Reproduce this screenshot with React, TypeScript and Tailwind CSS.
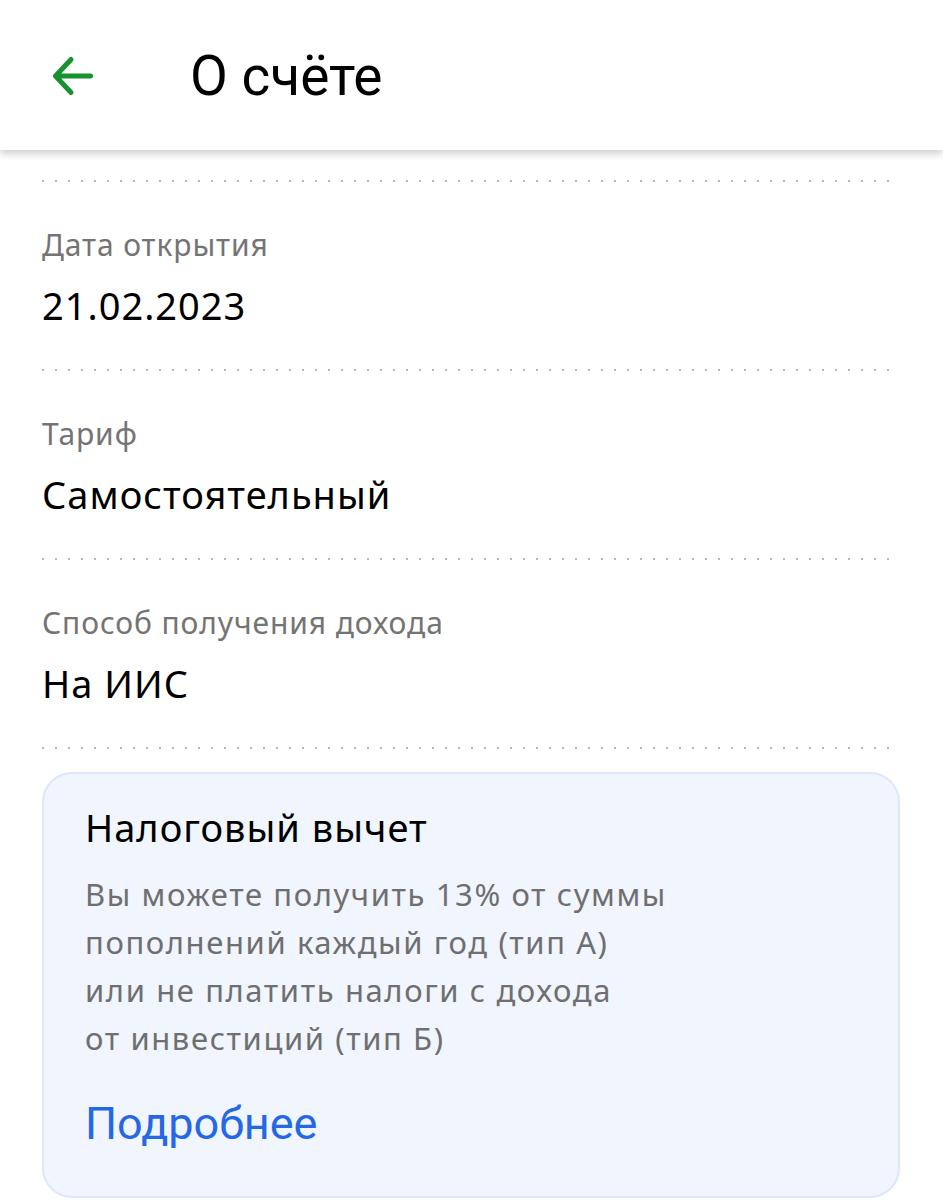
import React from 'react';

const rows = [
  { label: 'Дата открытия', value: '21.02.2023' },
  { label: 'Тариф', value: 'Самостоятельный' },
  { label: 'Способ получения дохода', value: 'На ИИС' },
];

const Dots = () => (
  <div className="h-[2px] w-full bg-[linear-gradient(to_right,#b8b8b8_2px,transparent_2px)] bg-[length:13px_2px] bg-repeat-x" />
);

const App: React.FC = () => {
  return (
    <div className="min-h-screen bg-white font-['Noto_Sans',sans-serif]">
      <header className="relative z-10 flex h-[150px] items-center bg-white shadow-[0_3px_8px_rgba(0,0,0,0.22)]">
        <svg width="46" height="46" viewBox="0 0 46 46" className="ml-[50px] mt-[4px]" fill="none">
          <path
            d="M5.5 22H40.5M21 5.5L5.5 22L21 38.5"
            stroke="#17922f"
            strokeWidth="5"
            strokeLinecap="round"
            strokeLinejoin="round"
          />
        </svg>
        <h1 className="ml-[94px] mt-[2px] font-['Roboto',sans-serif] text-[55px] leading-none text-black">
          О счёте
        </h1>
      </header>

      <main className="pl-[42px] pr-[43px] pt-[30px]">
        <Dots />
        {rows.map((row) => (
          <div key={row.label}>
            <div className="pt-[45px] pb-[42px]">
              <div className="text-[30px] leading-[36px] tracking-[0.9px] text-[#747474]">{row.label}</div>
              <div className="mt-[20px] text-[38px] leading-[44px] tracking-[1px] text-black">{row.value}</div>
            </div>
            <Dots />
          </div>
        ))}

        <div className="mt-[23px] rounded-[30px] border-2 border-[#dde7fa] bg-[#f0f5fe] px-[41px] pt-[31px] pb-[46px]">
          <div className="text-[38px] leading-[44px] tracking-[1px] text-black">Налоговый вычет</div>
          <p className="mt-[21px] text-[31px] leading-[48px] tracking-[1.6px] text-[#6f6f6f]">
            Вы можете получить 13% от суммы
            <br />
            пополнений каждый год (тип А)
            <br />
            или не платить налоги с дохода
            <br />
            от инвестиций (тип Б)
          </p>
          <a className="mt-[36px] block font-['Roboto',sans-serif] text-[45px] leading-[52px] text-[#2568e6]">
            Подробнее
          </a>
        </div>
      </main>
    </div>
  );
};

export default App;
